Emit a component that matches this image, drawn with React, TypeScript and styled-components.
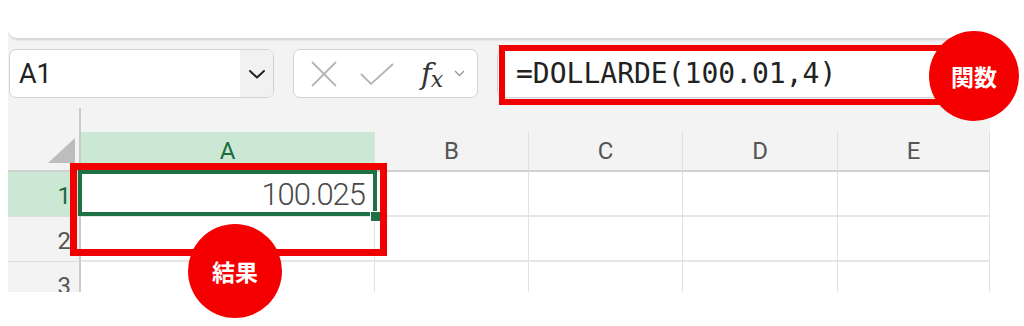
import styled, { createGlobalStyle } from "styled-components"
import { Fragment } from "react"

const GlobalStyle = createGlobalStyle`
  html, body { margin: 0; padding: 0; background: #fff; }
  body { font-family: Roboto, "Noto Sans", sans-serif; }
`

const Page = styled.div`
  position: relative;
  width: 1024px;
  height: 326px;
  padding: 30px 0 0 8px;
  box-sizing: border-box;
  overflow: hidden;
`

const Window = styled.div`
  width: 982px;
  background: #f3f3f3;
  display: flex;
  flex-direction: column;
`

const Ribbon = styled.div`
  height: 8px;
  background: #fff;
  border-bottom: 2px solid #d9d9d9;
  border-bottom-left-radius: 12px;
  box-shadow: 0 1px 2px rgba(0, 0, 0, 0.06);
`

const FormulaRow = styled.div`
  display: flex;
  align-items: stretch;
  height: 49px;
  margin: 9px 0 10px 1px;
  gap: 19px;
`

const Box = styled.div`
  background: #fff;
  border: 1px solid #d2d2d2;
  border-radius: 7px;
  box-sizing: border-box;
  display: flex;
  align-items: center;
  overflow: hidden;
`

const NameBox = styled(Box)`
  width: 265px;
`

const NameText = styled.div`
  flex: 1;
  padding-left: 9px;
  font-size: 27px;
  color: #222;
`

const NameDrop = styled.div`
  width: 33px;
  align-self: stretch;
  background: #f1f1f1;
  display: flex;
  align-items: center;
  justify-content: center;
`

const FxBox = styled(Box)`
  width: 185px;
  padding-left: 17px;
`

const IconSlot = styled.div<{ $w: number }>`
  width: ${(p) => p.$w}px;
  display: flex;
  align-items: center;
  justify-content: center;
`

const Fx = styled.div`
  font-family: "DejaVu Serif", serif;
  font-style: italic;
  font-size: 29px;
  color: #333;
  letter-spacing: -1px;
  margin-left: 4px;
  span {
    font-size: 22px;
    position: relative;
    top: 3px;
  }
`

const FormulaBar = styled(Box)`
  flex: 1;
  margin-right: 5px;
  padding-left: 18px;
  font-family: "DejaVu Sans Mono", "Liberation Mono", monospace;
  font-size: 28px;
  color: #222;
  border-top-right-radius: 0;
  border-bottom-right-radius: 0;
`

const Sheet = styled.div`
  display: grid;
  grid-template-columns: 73px 294px 154px 154px 155px 152px;
  grid-template-rows: 64px 45px 45px 45px;
  height: 184px;
  overflow: hidden;
`

const Corner = styled.div`
  position: relative;
  border-right: 2px solid #c9c9c9;
  border-bottom: 2px solid #d0d0d0;
  box-sizing: border-box;
  svg {
    position: absolute;
    right: 4px;
    bottom: 7px;
  }
`

const ColHead = styled.div<{ $sel?: boolean }>`
  align-self: end;
  height: 40px;
  box-sizing: border-box;
  display: flex;
  align-items: center;
  justify-content: center;
  font-size: 24px;
  color: ${(p) => (p.$sel ? "#1d6b3f" : "#555")};
  background: ${(p) => (p.$sel ? "#cbe8d4" : "transparent")};
  border-right: 1px solid #e0e0e0;
  border-bottom: 2px solid #d0d0d0;
`

const RowHead = styled.div<{ $sel?: boolean }>`
  display: flex;
  align-items: center;
  justify-content: flex-end;
  padding: 3px 8px 0 0;
  box-sizing: border-box;
  font-size: 24px;
  color: ${(p) => (p.$sel ? "#1d6b3f" : "#555")};
  background: ${(p) => (p.$sel ? "#cbe8d4" : "#f3f3f3")};
  border-right: 2px solid #c9c9c9;
  border-bottom: 1px solid #dedede;
  overflow: hidden;
`

const Cell = styled.div<{ $active?: boolean }>`
  position: relative;
  z-index: ${(p) => (p.$active ? 1 : 0)};
  background: #fff;
  border-right: 1px solid #e2e2e2;
  border-bottom: 2px solid #e6e6e6;
  box-sizing: border-box;
  display: flex;
  align-items: center;
  justify-content: flex-end;
  padding: 2px 9px 0 0;
  font-size: 31px;
  font-weight: 300;
  letter-spacing: -1px;
  color: #4a4a4a;
  ${(p) =>
    p.$active &&
    `
    &::after {
      content: "";
      position: absolute;
      left: -3px;
      top: -2px;
      right: -3px;
      bottom: -1px;
      border: 4px solid #1e7145;
    }
  `}
`

const FillHandle = styled.div`
  position: absolute;
  right: -7px;
  bottom: -7px;
  width: 9px;
  height: 9px;
  background: #1e7145;
  border: 1px solid #fff;
  z-index: 2;
`

const RedFrame = styled.div<{ $x: number; $y: number; $w: number; $h: number; $t: number }>`
  position: absolute;
  left: ${(p) => p.$x}px;
  top: ${(p) => p.$y}px;
  width: ${(p) => p.$w}px;
  height: ${(p) => p.$h}px;
  border: ${(p) => p.$t}px solid #f00000;
  box-sizing: border-box;
  z-index: 3;
`

const Badge = styled.div<{ $x: number; $y: number; $d: number }>`
  position: absolute;
  z-index: 4;
  left: ${(p) => p.$x}px;
  top: ${(p) => p.$y}px;
  width: ${(p) => p.$d}px;
  height: ${(p) => p.$d}px;
  border-radius: 50%;
  background: #f50000;
  color: #fff;
  display: flex;
  align-items: center;
  justify-content: center;
  font-family: "Noto Sans CJK JP", "Noto Sans", sans-serif;
  font-weight: 700;
  font-size: 23px;
`

const cols = ["A", "B", "C", "D", "E"]

export default function App() {
  return (
    <Page>
      <GlobalStyle />
      <Window>
        <Ribbon />
        <FormulaRow>
          <NameBox>
            <NameText>A1</NameText>
            <NameDrop>
              <svg width="18" height="12" viewBox="0 0 18 12">
                <path d="M2 3 L9 9.5 L16 3" fill="none" stroke="#222" strokeWidth="2" strokeLinecap="round" strokeLinejoin="round" />
              </svg>
            </NameDrop>
          </NameBox>
          <FxBox>
            <IconSlot $w={26}>
              <svg width="26" height="26" viewBox="0 0 26 26">
                <path d="M1 1 L25 25 M25 1 L1 25" stroke="#b5b5b5" strokeWidth="1.8" />
              </svg>
            </IconSlot>
            <IconSlot $w={80}>
              <svg width="34" height="22" viewBox="0 0 34 22">
                <path d="M1 11 L11 21 L33 1" fill="none" stroke="#b5b5b5" strokeWidth="1.8" />
              </svg>
            </IconSlot>
            <Fx>
              f<span>x</span>
            </Fx>
            <IconSlot $w={34}>
              <svg width="11" height="7" viewBox="0 0 11 7">
                <path d="M1 1 L5.5 5.5 L10 1" fill="none" stroke="#999" strokeWidth="1.3" />
              </svg>
            </IconSlot>
          </FxBox>
          <FormulaBar>=DOLLARDE(100.01,4)</FormulaBar>
        </FormulaRow>
        <Sheet>
          <Corner>
            <svg width="27" height="25" viewBox="0 0 27 25">
              <polygon points="0,25 27,25 27,0" fill="#bdbdbd" />
            </svg>
          </Corner>
          {cols.map((c) => (
            <ColHead key={c} $sel={c === "A"}>
              {c}
            </ColHead>
          ))}
          {[1, 2, 3].map((r) => (
            <Fragment key={r}>
              <RowHead $sel={r === 1}>{r}</RowHead>
              {cols.map((c) => (
                <Cell key={c + r} $active={c === "A" && r === 1}>
                  {c === "A" && r === 1 ? "100.025" : ""}
                  {c === "A" && r === 1 && <FillHandle />}
                </Cell>
              ))}
            </Fragment>
          ))}
        </Sheet>
      </Window>
      <RedFrame $x={499} $y={45} $w={455} $h={60} $t={6} />
      <RedFrame $x={70} $y={163} $w={317} $h={93} $t={7} />
      <Badge $x={929} $y={31} $d={90}>関数</Badge>
      <Badge $x={188} $y={224} $d={94}>結果</Badge>
    </Page>
  )
}
